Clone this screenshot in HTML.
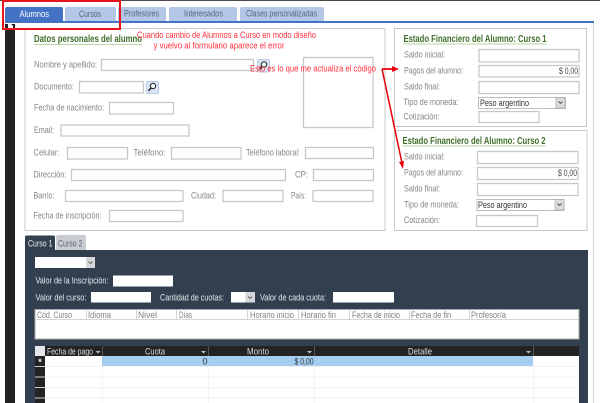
<!DOCTYPE html>
<html><head><meta charset="utf-8"><style>
html,body{margin:0;padding:0;background:#fff;width:600px;height:403px;overflow:hidden}
svg{display:block;filter:blur(.35px)}
text{font-family:"Liberation Sans",sans-serif;font-size:9.5px}
.l{fill:#858585}
.i{fill:#fff;stroke:#c8c8c8;stroke-width:1.3}
.t{fill:#3f6f2a;font-size:10.500px;font-weight:bold}
.r{fill:#ff2f3b;font-size:9.500px}
.w{fill:#e6e9ed;font-size:9.500px}
.g{fill:#808080;font-size:9px}
.h{fill:#dcdcdc;font-size:9px}
.tab{fill:#b4c7e7}
</style></head><body>
<svg width="600" height="403" viewBox="0 0 600 403" xmlns="http://www.w3.org/2000/svg">
<rect width="600" height="403" fill="#fff"/>
<rect width="600" height="1" fill="#4a4a4a"/>
<!-- tabs -->
<path d="M5 21V9q0-2 2-2h54q2 0 2 2v12z" fill="#4472c4"/>
<path class="tab" d="M65 21V9q0-2 2-2h47q2 0 2 2v12z"/>
<path class="tab" d="M118 21V9q0-2 2-2h44q2 0 2 2v12z"/>
<path class="tab" d="M169 21V9q0-2 2-2h64q2 0 2 2v12z"/>
<path class="tab" d="M240 21V9q0-2 2-2h80q2 0 2 2v12z"/>
<text x="19.500" y="17" fill="#fff" textLength="29.500" lengthAdjust="spacingAndGlyphs">Alumnos</text>
<text x="79" y="17" fill="#55667f" textLength="22" lengthAdjust="spacingAndGlyphs">Cursos</text>
<text x="124" y="16.500" fill="#55667f" textLength="35" lengthAdjust="spacingAndGlyphs">Profesores</text>
<text x="184" y="16.500" fill="#55667f" textLength="39" lengthAdjust="spacingAndGlyphs">Interesados</text>
<text x="246" y="16.500" fill="#55667f" textLength="71" lengthAdjust="spacingAndGlyphs">Clases personalizadas</text>
<rect x="5" y="21" width="589" height="2" fill="#4472c4"/>
<rect x="593" y="23" width="1" height="380" fill="#d5d5d5"/>
<!-- sidebar -->
<rect x="5" y="24" width="10" height="379" fill="#222"/>
<path d="M8 24h3l2 2v3H8z" fill="#fff"/>
<!-- main boxes -->
<rect x="25" y="28.500" width="360" height="202" fill="#fff" stroke="#c8c8c8"/>
<rect x="394.500" y="28.500" width="192" height="98" fill="#fff" stroke="#c8c8c8"/>
<rect x="394.500" y="130.500" width="192.500" height="100" fill="#fff" stroke="#c8c8c8"/>
<!-- personal data -->
<text class="t" x="34" y="42" textLength="108" lengthAdjust="spacingAndGlyphs">Datos personales del alumno</text>
<rect x="34" y="44" width="108" height="1" fill="#b7d59f"/>
<text class="l" x="34" y="67.500" textLength="63" lengthAdjust="spacingAndGlyphs">Nombre y apellido:</text>
<rect class="i" x="101.500" y="59.500" width="152" height="11"/>
<text class="l" x="34" y="89.500" textLength="40" lengthAdjust="spacingAndGlyphs">Documento:</text>
<rect class="i" x="79.500" y="81.500" width="64" height="11.500"/>
<text class="l" x="34" y="110.500" textLength="70" lengthAdjust="spacingAndGlyphs">Fecha de nacimiento:</text>
<rect class="i" x="109.500" y="102.500" width="64" height="11.500"/>
<text class="l" x="34" y="133" textLength="20" lengthAdjust="spacingAndGlyphs">Email:</text>
<rect class="i" x="61" y="125" width="128" height="11"/>
<text class="l" x="33.500" y="155.500" textLength="26" lengthAdjust="spacingAndGlyphs">Celular:</text>
<rect class="i" x="67.500" y="147.500" width="60" height="11.500"/>
<text class="l" x="133.500" y="155.500" textLength="32" lengthAdjust="spacingAndGlyphs">Teléfono:</text>
<rect class="i" x="171.500" y="147.500" width="69.500" height="11.500"/>
<text class="l" x="246" y="155.500" textLength="54" lengthAdjust="spacingAndGlyphs">Teléfono laboral:</text>
<rect class="i" x="305.500" y="147.500" width="68" height="11"/>
<text class="l" x="33.500" y="177.500" textLength="33" lengthAdjust="spacingAndGlyphs">Dirección:</text>
<rect class="i" x="71.500" y="169.500" width="214" height="11"/>
<text class="l" x="295" y="177.500" textLength="13" lengthAdjust="spacingAndGlyphs">CP:</text>
<rect class="i" x="313.500" y="169.500" width="60" height="11"/>
<text class="l" x="33.500" y="198.500" textLength="21" lengthAdjust="spacingAndGlyphs">Barrio:</text>
<rect class="i" x="65.500" y="190.500" width="117.500" height="11"/>
<text class="l" x="191" y="198.500" textLength="25" lengthAdjust="spacingAndGlyphs">Ciudad:</text>
<rect class="i" x="223" y="190.500" width="60" height="11"/>
<text class="l" x="291" y="198.500" textLength="15" lengthAdjust="spacingAndGlyphs">País:</text>
<rect class="i" x="313" y="190.500" width="60" height="11"/>
<text class="l" x="33.500" y="218.500" textLength="68" lengthAdjust="spacingAndGlyphs">Fecha de inscripción:</text>
<rect class="i" x="109.500" y="210.500" width="73.500" height="11"/>
<rect class="i" x="303.500" y="57.500" width="69.500" height="70"/>
<!-- search buttons -->
<rect x="257.500" y="59.500" width="12" height="12.500" rx="1.500" fill="#dbe5f6" stroke="#b7c9e8"/><circle cx="264" cy="64.500" r="2.700" fill="#eaf6f6" stroke="#222" stroke-width="1"/><path d="M262 66.500l-2.500 3" stroke="#222" stroke-width="1.400"/>
<rect x="146.500" y="81.500" width="12" height="12" rx="1.500" fill="#dbe5f6" stroke="#b7c9e8"/><circle cx="153" cy="86" r="2.700" fill="#eaf6f6" stroke="#222" stroke-width="1"/><path d="M151 88l-2.500 3" stroke="#222" stroke-width="1.400"/>
<!-- finance 1 -->
<text class="t" x="403.500" y="42" textLength="143" lengthAdjust="spacingAndGlyphs">Estado Financiero del Alumno: Curso 1</text>
<rect x="403.500" y="43.500" width="143" height="1" fill="#b7d59f"/>
<text class="l" x="404" y="57.500" textLength="41" lengthAdjust="spacingAndGlyphs">Saldo inicial:</text>
<rect class="i" x="479" y="49.500" width="100" height="12.500"/>
<text class="l" x="404" y="73.500" textLength="59" lengthAdjust="spacingAndGlyphs">Pagos del alumno:</text>
<rect class="i" x="479" y="65.500" width="100" height="11.500"/>
<text x="578" y="74" fill="#444" text-anchor="end" textLength="19" lengthAdjust="spacingAndGlyphs">$ 0,00</text>
<text class="l" x="404" y="89.500" textLength="36" lengthAdjust="spacingAndGlyphs">Saldo final:</text>
<rect class="i" x="479" y="81.500" width="100" height="12"/>
<text class="l" x="403.500" y="105" textLength="55" lengthAdjust="spacingAndGlyphs">Tipo de moneda:</text>
<rect x="478.500" y="97.500" width="87" height="11" fill="#fff" stroke="#bdbdbd"/>
<text x="480" y="106" fill="#333" textLength="49" lengthAdjust="spacingAndGlyphs">Peso argentino</text>
<rect x="556" y="97.500" width="9" height="10.500" fill="#d9dde0" stroke="#a0a0a0" stroke-width=".6"/><path d="M558.500 101.500l2 2 2-2" fill="none" stroke="#555"/>
<text class="l" x="403.500" y="119.500" textLength="36" lengthAdjust="spacingAndGlyphs">Cotización:</text>
<rect class="i" x="479" y="111.500" width="60" height="11"/>
<!-- finance 2 -->
<text class="t" x="402.500" y="144" textLength="143" lengthAdjust="spacingAndGlyphs">Estado Financiero del Alumno: Curso 2</text>
<rect x="402.500" y="145.500" width="143" height="1" fill="#b7d59f"/>
<text class="l" x="404" y="159.500" textLength="41" lengthAdjust="spacingAndGlyphs">Saldo inicial:</text>
<rect class="i" x="477.500" y="151.500" width="100.500" height="12"/>
<text class="l" x="404" y="175.500" textLength="59" lengthAdjust="spacingAndGlyphs">Pagos del alumno:</text>
<rect class="i" x="477.500" y="167.500" width="100.500" height="12"/>
<text x="577" y="176" fill="#444" text-anchor="end" textLength="19" lengthAdjust="spacingAndGlyphs">$ 0,00</text>
<text class="l" x="404" y="191.500" textLength="36" lengthAdjust="spacingAndGlyphs">Saldo final:</text>
<rect class="i" x="477.500" y="183.500" width="100.500" height="12"/>
<text class="l" x="404" y="207.500" textLength="55" lengthAdjust="spacingAndGlyphs">Tipo de moneda:</text>
<rect x="477" y="199.500" width="87" height="11" fill="#fff" stroke="#bdbdbd"/>
<text x="478" y="208" fill="#333" textLength="49" lengthAdjust="spacingAndGlyphs">Peso argentino</text>
<rect x="555" y="199.500" width="9" height="10.500" fill="#d9dde0" stroke="#a0a0a0" stroke-width=".6"/><path d="M557.500 203.500l2 2 2-2" fill="none" stroke="#555"/>
<text class="l" x="404" y="223" textLength="36" lengthAdjust="spacingAndGlyphs">Cotización:</text>
<rect class="i" x="476.500" y="215.500" width="61" height="11"/>
<!-- lower panel -->
<path d="M25 250v-13q0-1.500 1.500-1.500h27q1.500 0 1.500 1.500v13z" fill="#323f4f"/>
<path d="M56 250v-13q0-2 2-2h26q2 0 2 2v13z" fill="#c9cdd2"/>
<text x="28" y="246.500" fill="#eef0f2" textLength="24.500" lengthAdjust="spacingAndGlyphs">Curso 1</text>
<text x="58" y="246.500" fill="#5a6470" textLength="24.500" lengthAdjust="spacingAndGlyphs">Curso 2</text>
<rect x="25" y="250" width="563" height="153" fill="#323f4f"/>
<rect x="35" y="257" width="60" height="11" fill="#fff"/>
<rect x="86" y="257" width="9" height="11" fill="#d5d8da"/><path d="M88.500 261.500l2 2 2-2" fill="none" stroke="#666"/>
<text class="w" x="35.500" y="283.500" textLength="73" lengthAdjust="spacingAndGlyphs">Valor de la Inscripción:</text>
<rect x="113" y="275.500" width="60" height="11" fill="#fff"/>
<text class="w" x="35.500" y="300.500" textLength="51" lengthAdjust="spacingAndGlyphs">Valor del curso:</text>
<rect x="91" y="292" width="60" height="10.500" fill="#fff"/>
<text class="w" x="160" y="300.500" textLength="64" lengthAdjust="spacingAndGlyphs">Cantidad de cuotas:</text>
<rect x="231" y="292" width="24" height="10.500" fill="#fff"/>
<rect x="245.500" y="292" width="9.500" height="10.500" fill="#d5d8da"/><path d="M248 296.500l2 2 2-2" fill="none" stroke="#666"/>
<text class="w" x="260" y="300.500" textLength="66" lengthAdjust="spacingAndGlyphs">Valor de cada cuota:</text>
<rect x="333" y="292" width="61" height="10.500" fill="#fff"/>
<!-- subform table -->
<rect x="35" y="309.500" width="544" height="29.500" fill="#fff" stroke="#a5a9ae"/>
<rect x="35" y="319" width="544" height="1" fill="#d4d4d4"/>
<path d="M86.500 310v9M136.500 310v9M176.500 310v9M247.500 310v9M298.500 310v9M349.500 310v9M409.500 310v9M469.500 310v9" stroke="#d4d4d4"/>
<text class="g" x="37" y="318" textLength="35" lengthAdjust="spacingAndGlyphs">Cód. Curso</text>
<text class="g" x="88" y="318" textLength="23" lengthAdjust="spacingAndGlyphs">Idioma</text>
<text class="g" x="138" y="318" textLength="19" lengthAdjust="spacingAndGlyphs">Nivel</text>
<text class="g" x="179" y="318" textLength="13" lengthAdjust="spacingAndGlyphs">Días</text>
<text class="g" x="250" y="318" textLength="44" lengthAdjust="spacingAndGlyphs">Horario inicio</text>
<text class="g" x="301" y="318" textLength="35" lengthAdjust="spacingAndGlyphs">Horario fin</text>
<text class="g" x="352" y="318" textLength="48" lengthAdjust="spacingAndGlyphs">Fecha de inicio</text>
<text class="g" x="411" y="318" textLength="40" lengthAdjust="spacingAndGlyphs">Fecha de fin</text>
<text class="g" x="471" y="318" textLength="35" lengthAdjust="spacingAndGlyphs">Profesor/a</text>
<!-- datasheet -->
<rect x="35" y="346" width="544" height="57" fill="#fff"/>
<rect x="45" y="346" width="534" height="10" fill="#232323"/>
<rect x="35" y="346" width="10" height="10" fill="#e4e7ec"/>
<path d="M102.500 346v10M208.500 346v10M314.500 346v10M533.500 346v10" stroke="#555"/>
<rect x="102" y="356" width="431" height="10.500" fill="#a5cdf0"/>
<rect x="35" y="356" width="10" height="47" fill="#232323"/>
<path d="M35 366.500h10M35 377h10M35 387.500h10M35 398h10" stroke="#d0d0d0"/>
<path d="M45 377h534M45 387.500h534M45 398h534M45 366.500h534" stroke="#f3f3f3"/>
<path d="M102.500 367v36M208.500 367v36M314.500 367v36M533.500 367v36" stroke="#f5f5f5"/>
<text class="h" x="47" y="354.500" textLength="46" lengthAdjust="spacingAndGlyphs">Fecha de pago</text>
<path d="M95.500 351h5l-2.500 2.500zM201 351h5l-2.500 2.500zM307 351h5l-2.500 2.500zM526 351h5l-2.500 2.500z" fill="#bbb"/>
<text class="h" x="155" y="354.500" text-anchor="middle" textLength="20" lengthAdjust="spacingAndGlyphs">Cuota</text>
<text class="h" x="258" y="354.500" text-anchor="middle" textLength="22" lengthAdjust="spacingAndGlyphs">Monto</text>
<text class="h" x="420" y="354.500" text-anchor="middle" textLength="24" lengthAdjust="spacingAndGlyphs">Detalle</text>
<text x="40" y="365" fill="#fff" font-weight="bold" text-anchor="middle" style="font-size:9px">*</text>
<text x="207.500" y="364.500" fill="#333" text-anchor="end" style="font-size:9px">0</text>
<text x="313.500" y="364.500" fill="#333" text-anchor="end" textLength="19" lengthAdjust="spacingAndGlyphs" style="font-size:9px">$ 0,00</text>
<!-- annotations -->
<text class="r" x="137" y="38" textLength="179" lengthAdjust="spacingAndGlyphs">Cuando cambio de Alumnos a Curso en modo diseño</text>
<text class="r" x="153.500" y="48.500" textLength="131" lengthAdjust="spacingAndGlyphs">y vuelvo al formulario aparece el error</text>
<text class="r" x="250" y="71.500" textLength="126" lengthAdjust="spacingAndGlyphs">Esto es lo que me actualiza el código</text>
<path d="M382 69h11" stroke="#e8000b" stroke-width="1.800" fill="none"/>
<path d="M399 69l-7-3v6z" fill="#e8000b"/>
<path d="M382 69l20 94" stroke="#e8000b" stroke-width="1.500" fill="none"/>
<path d="M403 169l-4-7 5-1z" fill="#e8000b"/>
<rect x="3" y="1" width="117" height="28" fill="none" stroke="#e8141c" stroke-width="2"/>
</svg>
</body></html>
